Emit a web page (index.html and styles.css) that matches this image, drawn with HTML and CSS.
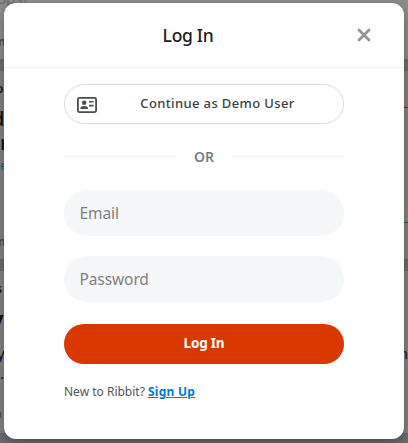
FILE: index.html
```
<!DOCTYPE html>
<html lang="en">
<head>
<meta charset="utf-8">
<title>Ribbit</title>
<link rel="stylesheet" href="styles.css">
</head>
<body>
<div class="feed" aria-hidden="true">
  <article class="post post-first">
    <p class="hint">ops?</p>
    <p class="meta meta-first">m</p>
  </article>
  <article class="post post-second">
    <p class="author">o</p>
    <h2 class="headline">d<br>n</h2>
    <p class="link">te</p>
    <hr class="rule rule-short">
    <hr class="rule rule-blue">
    <p class="meta meta-second">m</p>
  </article>
  <article class="post post-third">
    <p class="author">s</p>
    <h2 class="headline headline-bold">v</h2>
    <div class="excerpt"><span>y</span><span>n</span></div>
    <p class="dot">.</p>
    <p class="meta meta-third">n</p>
  </article>
</div>
<main class="modal">
  <header class="modal-header">
    <h1><span class="title">Log In</span></h1>
    <button class="close" aria-label="Close">
      <svg width="14" height="14" viewBox="0 0 14 14"><path d="M2 2l10 10M12 2L2 12"/></svg>
    </button>
  </header>
  <form class="modal-body">
    <button class="demo" type="button">
      <svg width="20" height="16" viewBox="0 0 20 16">
        <rect class="card-frame" x=".9" y=".9" width="18.2" height="14.2" rx="1.5"/>
        <circle cx="7.2" cy="5.8" r="2.2"/>
        <path d="M3.4 12v-.8c0-1.3 1.6-2.2 3.8-2.2s3.8.9 3.8 2.2v.8z"/>
        <path d="M12 4h4.6v1.6H12zM12 7.8h4.6v1.6H12z"/>
      </svg>
      <span>Continue as Demo User</span>
    </button>
    <div class="divider"><span>OR</span></div>
    <input type="text" placeholder="Email" aria-label="Email">
    <input type="password" placeholder="Password" aria-label="Password">
    <button class="submit" type="button"><span>Log In</span></button>
    <p class="signup">New to Ribbit? <a href="#">Sign Up</a></p>
  </form>
</main>
</body>
</html>
```
FILE: styles.css
```
* { box-sizing: border-box; }
body {
  margin: 0;
  height: 443px;
  overflow: hidden;
  background: #6a6b6e;
  font-family: "Noto Sans", sans-serif;
}
p, h1, h2, hr { margin: 0; }
button { border: 0; padding: 0; font-family: inherit; }

.feed { height: 443px; overflow: hidden; color: #111; }
.post {
  display: flow-root;
  overflow: hidden;
  background: #828282;
  border-bottom: 1px solid #666;
}
.post-first { height: 60px; background: #8c8c8c; }
.post-second { height: 189px; margin-top: 11px; }
.post-third { height: 163px; margin-top: 11px; }
.hint { height: 20px; margin-top: -12px; font-size: 15px; line-height: 20px; color: #6b6b6b; text-indent: -3px; }
.meta { font-size: 12px; line-height: 16px; font-weight: 600; color: #454545; text-indent: -6px; }
.meta-first { margin-top: 26px; }
.author { height: 16px; margin-top: 10px; font-size: 12px; line-height: 16px; font-weight: 600; text-indent: -4px; }
.headline { height: 48px; margin-top: 10px; font-size: 20px; line-height: 24px; font-weight: 500; text-indent: -8px; }
.link { height: 16px; margin-top: 3px; font-size: 12px; line-height: 16px; color: #275680; text-indent: -4px; }
.rule { border: 0; height: 1px; background: #1d496c; }
.rule-short { width: 5px; margin: -67px 0 0 auto; }
.rule-blue { width: 5px; margin: 114px 0 0 auto; }
.meta-second { margin-top: 11px; }
.headline-bold { height: 24px; margin-top: 10px; font-weight: 700; }
.excerpt { display: flex; justify-content: space-between; margin-top: 12px; font-size: 15px; line-height: 20px; text-indent: -3px; }
.dot { height: 20px; font-size: 15px; line-height: 20px; }
.meta-third { margin-top: 23px; }

.modal {
  position: absolute;
  top: 3px;
  left: 4px;
  width: 400px;
  height: 436px;
  border-radius: 12px;
  background: #fff;
  box-shadow: 0 3px 10px rgba(0, 0, 0, .3);
}
.modal-header {
  display: grid;
  grid-template-columns: 44px 1fr 76px;
  align-items: center;
  height: 65px;
  border-bottom: 1px solid #edeff1;
}
h1 {
  grid-column: 2;
  margin-top: -1px;
  text-align: center;
  font-size: 17.5px;
  line-height: 24px;
  font-weight: 500;
  letter-spacing: -.3px;
  color: #1c1c1c;
}
.close { display: flex; justify-self: center; margin-right: 4px; background: none; }
.close path { fill: none; stroke: #949494; stroke-width: 2.8; stroke-linecap: round; }
.modal-body { display: flex; flex-direction: column; padding: 16px 60px 0; }
.demo {
  display: flex;
  align-items: center;
  height: 40px;
  padding: 0 13px 0 12px;
  border: 1px solid #dadbdf;
  border-radius: 20px;
  background: #fff;
  color: #3c4043;
}
.demo svg { margin-top: 1px; fill: #484b50; }
.demo .card-frame { fill: none; stroke: #484b50; stroke-width: 1.8; }
.demo span { flex: 1; margin-top: -2px; padding-left: 8px; font-size: 13px; font-weight: 500; letter-spacing: .37px; text-align: center; }
.divider {
  display: flex;
  align-items: center;
  gap: 18px;
  height: 20px;
  margin: 22px 0 24px;
  font-size: 14px;
  font-weight: 600;
  color: #787c7e;
}
.divider::before, .divider::after { content: ""; flex: 1; height: 1px; background: #edeff1; }
input {
  width: 280px;
  height: 46px;
  margin-bottom: 20px;
  padding: 0 16px 1px 15.5px;
  border: 0;
  border-radius: 23px;
  background: #f6f7f8;
  font-family: inherit;
  font-size: 15.5px;
  letter-spacing: -.1px;
}
input::placeholder { color: #808080; opacity: 1; }
.submit {
  height: 40px;
  margin-top: 2px;
  border-radius: 20px;
  background: #d93900;
  color: #fff;
  font-size: 13.5px;
  font-weight: 700;
  letter-spacing: -.2px;
}
.submit span { position: relative; top: -1px; }
.signup { margin-top: 20px; font-size: 12px; line-height: 16px; color: #555; }
.signup a { color: #0079d3; font-weight: 700; letter-spacing: .25px; text-decoration: underline; }
```
